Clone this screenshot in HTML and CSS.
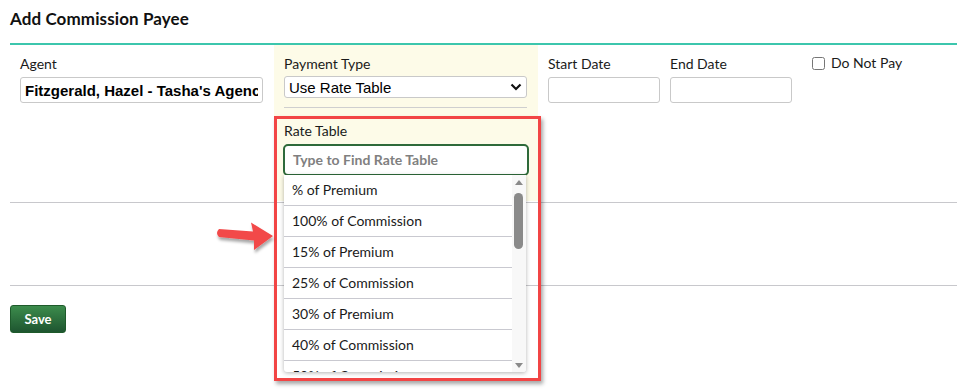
FILE: index.html
```html
<!DOCTYPE html>
<html>
<head>
<meta charset="utf-8">
<link rel="stylesheet" href="styles.css">
</head>
<body>
<div class="page">
  <h1 class="title">Add Commission Payee</h1>
  <div class="form-row">
    <div class="col col-agent">
      <label class="lbl">Agent</label>
      <input class="txt agent-input" type="text" value="Fitzgerald, Hazel - Tasha's Agency">
    </div>
    <div class="col col-pay">
      <label class="lbl">Payment Type</label>
      <div class="select">
        <span>Use Rate Table</span>
        <svg class="chev" width="12" height="8" viewBox="0 0 12 8"><path d="M1.5 1.5 L6 6 L10.5 1.5" fill="none" stroke="#111" stroke-width="2.2"/></svg>
      </div>
      <div class="sep"></div>
      <label class="lbl lbl-rate">Rate Table</label>
      <div class="search">Type to Find Rate Table</div>
    </div>
    <div class="col col-start">
      <label class="lbl">Start Date</label>
      <input class="txt date-input" type="text">
    </div>
    <div class="col col-end">
      <label class="lbl">End Date</label>
      <input class="txt date-input end" type="text">
    </div>
    <div class="col col-chk">
      <label class="chk"><input type="checkbox"><span>Do Not Pay</span></label>
    </div>
  </div>
  <div class="rule"></div>
  <div class="spacer"></div>
  <div class="rule"></div>
  <button class="save">Save</button>

  <div class="dropdown">
    <ul class="items">
      <li>% of Premium</li>
      <li>100% of Commission</li>
      <li>15% of Premium</li>
      <li>25% of Commission</li>
      <li>30% of Premium</li>
      <li>40% of Commission</li>
      <li>50% of Commission</li>
    </ul>
    <div class="scrollbar">
      <svg class="arr up" width="10" height="7" viewBox="0 0 10 7"><path d="M1 6 L5 1 L9 6 Z" fill="#8a8a8a"/></svg>
      <div class="thumb"></div>
      <svg class="arr down" width="10" height="7" viewBox="0 0 10 7"><path d="M1 1 L5 6 L9 1 Z" fill="#8a8a8a"/></svg>
    </div>
  </div>
  <div class="highlight"></div>
  <svg class="arrow" width="70" height="40" viewBox="0 0 70 40">
    <defs>
      <filter id="sh" x="-20%" y="-30%" width="150%" height="170%">
        <feDropShadow dx="1" dy="3" stdDeviation="1.6" flood-color="#000" flood-opacity="0.35"/>
      </filter>
    </defs>
    <path d="M7 9 L41 11.5 L39 2.5 L61 16 L42 30 L42 20.5 L7 17 Q3 13 7 9 Z" fill="#f24848" filter="url(#sh)"/>
  </svg>
</div>
</body>
</html>
```

FILE: styles.css
```css
* { box-sizing: border-box; }
html, body { margin: 0; padding: 0; background: #fff; }
body { font-family: Lato, "Open Sans", sans-serif; color: #1a1a1a; }
.page { position: relative; width: 957px; height: 390px; padding: 0 0 0 10px; overflow: hidden; }
.title { margin: 0; padding-top: 8px; height: 43px; font-size: 17px; font-weight: 700; color: #111; letter-spacing: 0.1px; }
.form-row { display: flex; border-top: 2px solid #3cc6ad; height: 158px; }
.col { padding-top: 10px; }
.col-agent { width: 264px; padding-left: 10px; }
.col-pay { width: 264px; padding: 10px 10px 0 10px; background: #fdfbe8; }
.col-start { width: 122px; padding-left: 10px; }
.col-end { width: 142px; padding-left: 10px; }
.col-chk { padding-left: 10px; }
.lbl { display: block; font-size: 14px; line-height: 18px; color: #1a1a1a; }
.txt { display: block; margin-top: 4px; height: 26px; border: 1px solid #c9c9c9; border-radius: 3px; background: #fff; padding: 0 4px; outline: none; }
.agent-input { width: 243px; font-family: "Liberation Sans", Arial, sans-serif; font-weight: 700; font-size: 15px; color: #000; }
.date-input { width: 112px; }
.date-input.end { width: 122px; }
.select { margin-top: 3px; height: 22px; width: 243px; border: 1px solid #c9c9c9; border-radius: 3px; background: #fff; display: flex; align-items: center; justify-content: space-between; padding: 0 3px 0 4px; font-family: "Liberation Sans", Arial, sans-serif; font-size: 15px; color: #000; }
.chev { margin-right: 1px; }
.sep { margin-top: 9px; height: 1px; background: #cfcfcf; width: 243px; }
.lbl-rate { margin-top: 14px; }
.search { margin-top: 4px; margin-left: -1px; width: 246px; height: 32px; border: 2px solid #2e6a3a; border-radius: 5px; background: #fff; font-size: 14px; font-weight: 700; color: #808080; padding: 5px 0 0 8px; }
.chk { display: flex; align-items: center; font-size: 14px; line-height: 18px; margin-top: -1px; }
.chk input { margin: 0 6px 0 0; width: 13px; height: 13px; }
.rule { height: 1px; background: #c8c8cc; }
.form-row + .rule { margin-top: 1px; }
.spacer { height: 82px; }
.save { margin-top: 19px; width: 56px; height: 28px; border: 1px solid #1e5a2b; border-radius: 3px; background: linear-gradient(#3c8c4c, #1e5530); color: #fff; font-family: Lato, sans-serif; font-size: 13px; font-weight: 700; padding: 0; }
.dropdown { position: absolute; left: 284px; top: 175px; width: 242px; height: 197px; background: #fff; box-shadow: 0 1px 4px rgba(0,0,0,0.3); border-radius: 0 0 3px 3px; overflow: hidden; display: flex; }
.items { list-style: none; margin: 0; padding: 0; width: 228px; }
.items li { height: 31px; border-bottom: 1px solid #c9c9d0; font-size: 14px; line-height: 30px; padding-left: 8px; color: #1a1a1a; }
.scrollbar { position: relative; width: 14px; background: #f8f8f8; }
.arr { position: absolute; left: 2px; }
.arr.up { top: 4px; }
.arr.down { bottom: 3px; }
.thumb { position: absolute; left: 2px; top: 18px; width: 9px; height: 56px; border-radius: 5px; background: #8a8a8a; }
.highlight { position: absolute; left: 274px; top: 116px; width: 267px; height: 265px; border: 3px solid #f24545; box-shadow: 2px 3px 4px rgba(0,0,0,0.35); }
.arrow { position: absolute; left: 212px; top: 220px; }
```
